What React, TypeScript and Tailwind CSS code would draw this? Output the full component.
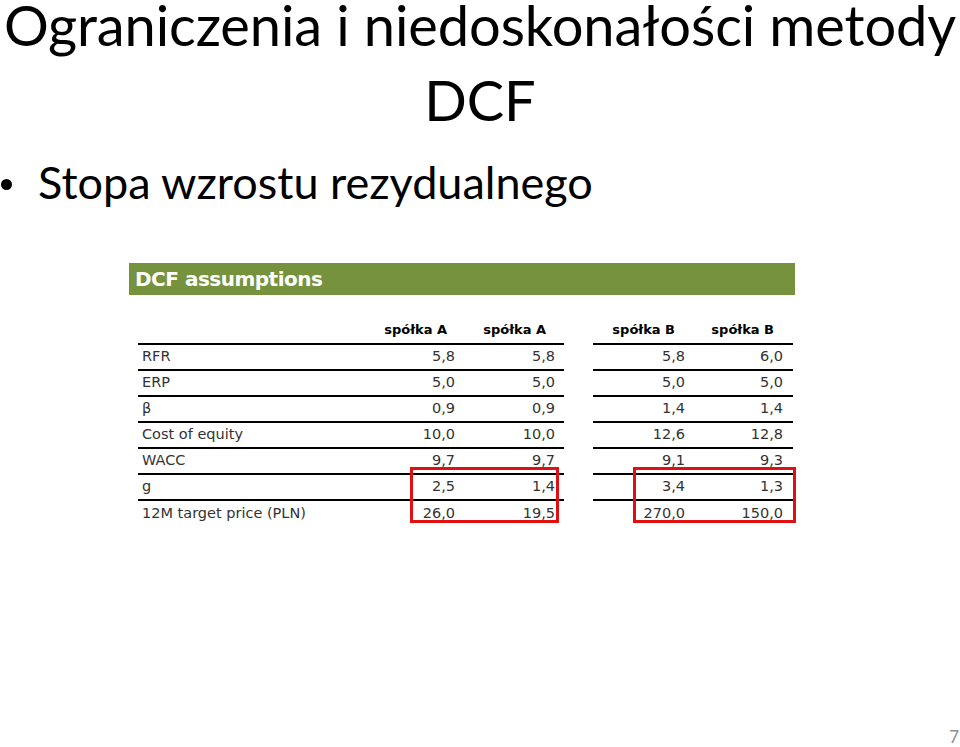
import React from "react";

const leftRows = [
  ["RFR", "5,8", "5,8"],
  ["ERP", "5,0", "5,0"],
  ["β", "0,9", "0,9"],
  ["Cost of equity", "10,0", "10,0"],
  ["WACC", "9,7", "9,7"],
  ["g", "2,5", "1,4"],
  ["12M target price (PLN)", "26,0", "19,5"],
];
const rightRows = [
  ["5,8", "6,0"],
  ["5,0", "5,0"],
  ["1,4", "1,4"],
  ["12,6", "12,8"],
  ["9,1", "9,3"],
  ["3,4", "1,3"],
  ["270,0", "150,0"],
];

export default function App() {
  return (
    <div className="relative w-[960px] h-[747px] bg-white overflow-hidden" style={{ fontFamily: "Lato, 'Open Sans', sans-serif" }}>
      <div className="text-center text-black text-[56px] tracking-[-0.1px]">
        <div className="leading-[50px]">Ograniczenia i niedoskonałości metody</div>
        <div className="leading-[75px] mt-[12px]">DCF</div>
      </div>
      <div className="flex items-center mt-[19px] text-black text-[45px] leading-[52px]">
        <span className="w-[38px] flex items-center pl-[1px] pt-[4px]">
          <span className="block w-[11px] h-[11px] rounded-full bg-black"></span>
        </span>
        <span>Stopa wzrostu rezydualnego</span>
      </div>

      <div className="relative ml-[129px] mt-[55px] w-[666px]" style={{ fontFamily: "'DejaVu Sans', Verdana, sans-serif" }}>
        <div className="h-[32px] bg-[#76923c] text-white font-bold text-[20px] leading-[32px] pl-[6px] tracking-[-0.5px]">
          DCF assumptions
        </div>
        <div className="flex mt-[22px]">
          <div className="ml-[9px] w-[426px]">
            <div className="grid grid-cols-[217px_100px_100px] h-[28px] items-center text-[13px] font-bold text-black border-b-2 border-black">
              <div></div>
              <div className="text-right pr-[8px]">spółka A</div>
              <div className="text-right pr-[9px]">spółka A</div>
            </div>
            {leftRows.map((r, i) => (
              <div key={r[0]} className={i < leftRows.length - 1 ? "grid grid-cols-[217px_100px_100px] h-[26px] items-center text-[14.5px] text-[#333] border-b-2 border-black" : "grid grid-cols-[217px_100px_100px] h-[26px] items-center text-[14.5px] text-[#333]"}>
                <div className="pl-[4px]">{r[0]}</div>
                <div className="text-right">{r[1]}</div>
                <div className="text-right">{r[2]}</div>
              </div>
            ))}
          </div>
          <div className="ml-[29px] w-[200px]">
            <div className="grid grid-cols-[92px_98px] h-[28px] items-center text-[13px] font-bold text-black border-b-2 border-black">
              <div className="text-right pr-[10px]">spółka B</div>
              <div className="text-right pr-[9px]">spółka B</div>
            </div>
            {rightRows.map((r, i) => (
              <div key={i} className={i < rightRows.length - 1 ? "grid grid-cols-[92px_98px] h-[26px] items-center text-[14.5px] text-[#333] border-b-2 border-black" : "grid grid-cols-[92px_98px] h-[26px] items-center text-[14.5px] text-[#333]"}>
                <div className="text-right">{r[0]}</div>
                <div className="text-right">{r[1]}</div>
              </div>
            ))}
          </div>
        </div>
        <div className="absolute left-[281px] top-[204px] w-[149px] h-[56px] border-[3px] border-[#e01010]"></div>
        <div className="absolute left-[504px] top-[204px] w-[163px] h-[56px] border-[3px] border-[#e01010]"></div>
      </div>

      <div className="absolute right-[1px] -bottom-[2px] text-[17px] text-[#8c8c8c]" style={{ fontFamily: "Lato, sans-serif" }}>7</div>
    </div>
  );
}
